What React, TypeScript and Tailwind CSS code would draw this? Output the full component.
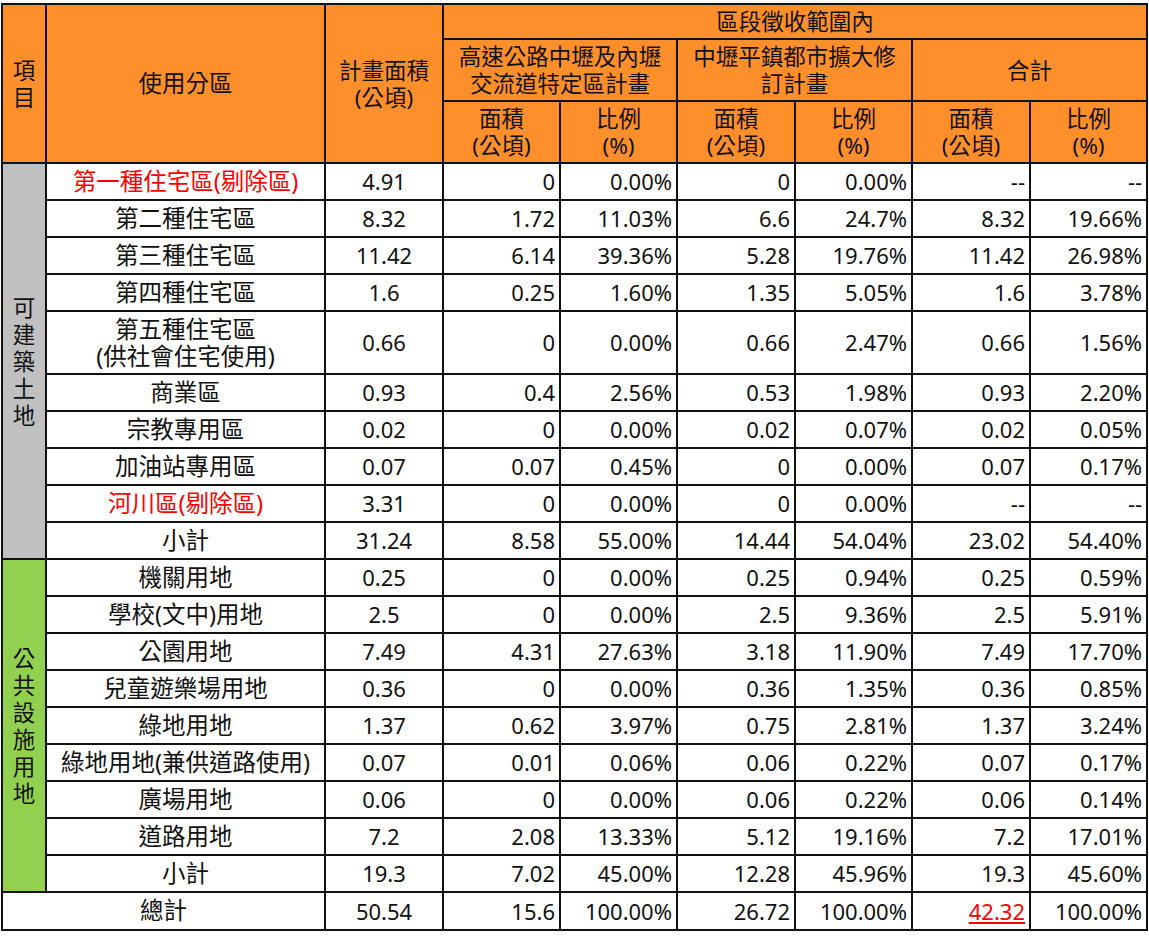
type Row = {
  name: React.ReactNode;
  red?: boolean;
  tall?: boolean;
  vals: string[];
};

const groupA: Row[] = [
  { name: "第一種住宅區(剔除區)", red: true, vals: ["4.91", "0", "0.00%", "0", "0.00%", "--", "--"] },
  { name: "第二種住宅區", vals: ["8.32", "1.72", "11.03%", "6.6", "24.7%", "8.32", "19.66%"] },
  { name: "第三種住宅區", vals: ["11.42", "6.14", "39.36%", "5.28", "19.76%", "11.42", "26.98%"] },
  { name: "第四種住宅區", vals: ["1.6", "0.25", "1.60%", "1.35", "5.05%", "1.6", "3.78%"] },
  {
    name: (
      <>
        第五種住宅區
        <br />
        (供社會住宅使用)
      </>
    ),
    tall: true,
    vals: ["0.66", "0", "0.00%", "0.66", "2.47%", "0.66", "1.56%"],
  },
  { name: "商業區", vals: ["0.93", "0.4", "2.56%", "0.53", "1.98%", "0.93", "2.20%"] },
  { name: "宗教專用區", vals: ["0.02", "0", "0.00%", "0.02", "0.07%", "0.02", "0.05%"] },
  { name: "加油站專用區", vals: ["0.07", "0.07", "0.45%", "0", "0.00%", "0.07", "0.17%"] },
  { name: "河川區(剔除區)", red: true, vals: ["3.31", "0", "0.00%", "0", "0.00%", "--", "--"] },
  { name: "小計", vals: ["31.24", "8.58", "55.00%", "14.44", "54.04%", "23.02", "54.40%"] },
];

const groupB: Row[] = [
  { name: "機關用地", vals: ["0.25", "0", "0.00%", "0.25", "0.94%", "0.25", "0.59%"] },
  { name: "學校(文中)用地", vals: ["2.5", "0", "0.00%", "2.5", "9.36%", "2.5", "5.91%"] },
  { name: "公園用地", vals: ["7.49", "4.31", "27.63%", "3.18", "11.90%", "7.49", "17.70%"] },
  { name: "兒童遊樂場用地", vals: ["0.36", "0", "0.00%", "0.36", "1.35%", "0.36", "0.85%"] },
  { name: "綠地用地", vals: ["1.37", "0.62", "3.97%", "0.75", "2.81%", "1.37", "3.24%"] },
  { name: "綠地用地(兼供道路使用)", vals: ["0.07", "0.01", "0.06%", "0.06", "0.22%", "0.07", "0.17%"] },
  { name: "廣場用地", vals: ["0.06", "0", "0.00%", "0.06", "0.22%", "0.06", "0.14%"] },
  { name: "道路用地", vals: ["7.2", "2.08", "13.33%", "5.12", "19.16%", "7.2", "17.01%"] },
  { name: "小計", vals: ["19.3", "7.02", "45.00%", "12.28", "45.96%", "19.3", "45.60%"] },
];

const cell = "border-2 border-[#111] p-0";
const head = `${cell} bg-[#ff8f2b] text-center align-middle text-[22.5px] font-normal leading-[27px]`;

function DataCells({ row }: { row: Row }) {
  return (
    <>
      <td className={`${cell} text-center text-[23.5px] leading-[27px] ${row.red ? "text-[#ff0000]" : ""}`}>
        {row.name}
      </td>
      <td className={`${cell} text-center`}>{row.vals[0]}</td>
      {row.vals.slice(1).map((v, i) => (
        <td key={i} className={`${cell} pr-[4px] text-right`}>
          {v}
        </td>
      ))}
    </>
  );
}

function Group({ rows, label, color }: { rows: Row[]; label: string; color: string }) {
  return (
    <>
      {rows.map((row, i) => (
        <tr key={i} className={row.tall ? "h-[63px]" : "h-[37px]"}>
          {i === 0 && (
            <td rowSpan={rows.length} className={`${cell} ${color} text-center align-middle text-[22.5px] leading-[27px]`}>
              {label.split("").map((c, j) => (
                <div key={j}>{c}</div>
              ))}
            </td>
          )}
          <DataCells row={row} />
        </tr>
      ))}
    </>
  );
}

export default function App() {
  return (
    <div className="bg-white pl-[1px] pt-[3px] font-['Noto_Sans','Noto_Sans_CJK_TC',sans-serif] text-[22px] text-[#111]">
      <table className="w-[1147px] table-fixed border-collapse">
        <colgroup>
          <col className="w-[44px]" />
          <col className="w-[279px]" />
          <col className="w-[118px]" />
          <col className="w-[117px]" />
          <col className="w-[117px]" />
          <col className="w-[118px]" />
          <col className="w-[117px]" />
          <col className="w-[118px]" />
          <col className="w-[117px]" />
        </colgroup>
        <thead>
          <tr className="h-[35px]">
            <th rowSpan={3} className={head}>
              項<br />目
            </th>
            <th rowSpan={3} className={`${head} text-[23.5px]`}>
              使用分區
            </th>
            <th rowSpan={3} className={head}>
              計畫面積
              <br />
              (公頃)
            </th>
            <th colSpan={6} className={head}>
              區段徵收範圍內
            </th>
          </tr>
          <tr className="h-[62px]">
            <th colSpan={2} className={head}>
              高速公路中壢及內壢
              <br />
              交流道特定區計畫
            </th>
            <th colSpan={2} className={head}>
              中壢平鎮都市擴大修
              <br />
              訂計畫
            </th>
            <th colSpan={2} className={head}>
              合計
            </th>
          </tr>
          <tr className="h-[62px]">
            {[0, 1, 2].map((k) => (
              <>
                <th key={`a${k}`} className={head}>
                  面積
                  <br />
                  (公頃)
                </th>
                <th key={`b${k}`} className={head}>
                  比例
                  <br />
                  (%)
                </th>
              </>
            ))}
          </tr>
        </thead>
        <tbody>
          <Group rows={groupA} label="可建築土地" color="bg-[#c0c0c0]" />
          <Group rows={groupB} label="公共設施用地" color="bg-[#92d050]" />
          <tr className="h-[38px]">
            <td colSpan={2} className={`${cell} text-center text-[23.5px]`}>
              總計
            </td>
            <td className={`${cell} text-center`}>50.54</td>
            <td className={`${cell} pr-[4px] text-right`}>15.6</td>
            <td className={`${cell} pr-[4px] text-right`}>100.00%</td>
            <td className={`${cell} pr-[4px] text-right`}>26.72</td>
            <td className={`${cell} pr-[4px] text-right`}>100.00%</td>
            <td className={`${cell} pr-[4px] text-right`}>
              <span className="text-[#ff0000] underline">42.32</span>
            </td>
            <td className={`${cell} pr-[4px] text-right`}>100.00%</td>
          </tr>
        </tbody>
      </table>
    </div>
  );
}
